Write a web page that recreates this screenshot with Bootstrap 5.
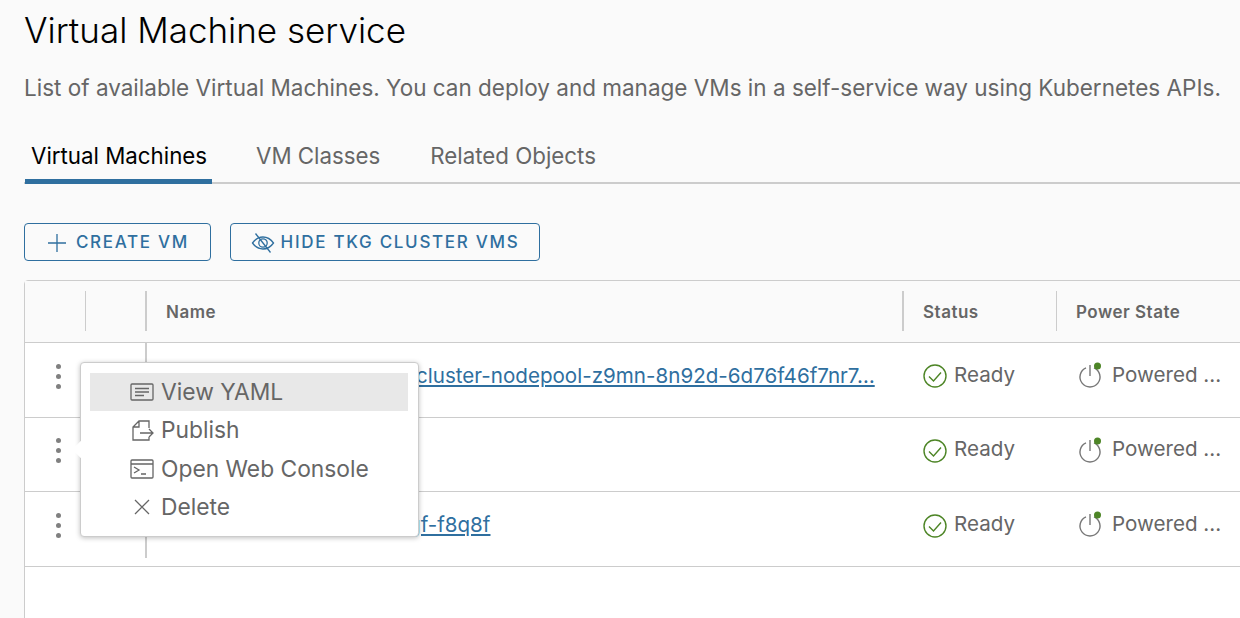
<!DOCTYPE html>
<html lang="en">
<head>
    <meta charset="UTF-8">
    <meta name="viewport" content="width=device-width, initial-scale=1.0">
    <title>Virtual Machine service</title>
    <link href="https://cdn.jsdelivr.net/npm/bootstrap@5.3.2/dist/css/bootstrap.min.css" rel="stylesheet">
    <style>
        html, body { height: 618px; overflow: hidden; }
        body { background: #fafafa; color: #666; font-family: "Inter", "Liberation Sans", sans-serif; }
        .page-wrap { width: 1240px; overflow: hidden; height: 618px; padding: 0 0 0 24px; }
        .page-title { font-size: 35px; font-weight: 300; color: #000; line-height: 40px; margin: 10px 0 0; }
        .page-desc { font-size: 22.500px; line-height: 28px; margin: 24px 0 0; width: 1216px; white-space: nowrap; color: #666; }
        .vm-tabs { width: 1216px; margin-top: 39px; height: 43px; border-bottom: 2px solid #ccc; gap: 38px; flex-wrap: nowrap; }
        .vm-tabs .nav-link { font-size: 22.300px; line-height: 28px; color: #666; padding: 1px 6px 0; height: 43px; margin-bottom: -2px; border-bottom: 5px solid transparent; border-radius: 0; white-space: nowrap; }
        .vm-tabs .nav-link.active { color: #000; border-bottom-color: #2f6f9f; }
        .vm-tabs .nav-item:first-child .nav-link { width: 187px; margin-left: 1px; }
        .action-row { margin-top: 39px; gap: 19px; }
        .vm-btn { height: 38px; display: flex; align-items: center; justify-content: center; gap: 6px; padding: 1px 0 0; font-size: 17px; font-weight: 500; letter-spacing: 1.700px; color: #2f6f9f; background: transparent; border: 1px solid #2f6f9f; border-radius: 4px; white-space: nowrap; }
        .vm-btn:hover { color: #2f6f9f; }
        .btn-create { width: 187px; gap: 8px; }
        .btn-hide { width: 310px; }
        .grid-box { margin-top: 19px; width: 1300px; height: 400px; background: #fff; border: 1px solid #ccc; border-radius: 4px 0 0 0; position: relative; }
        .vm-grid { table-layout: fixed; width: 1300px; margin: 0; --bs-table-bg: transparent; }
        .vm-grid th, .vm-grid td { padding: 0; border: 0; border-bottom: 1px solid #ccc; vertical-align: middle; color: #666; }
        .vm-grid th { height: 61px; background: #fafafa; font-size: 17px; font-weight: 600; letter-spacing: .5px; }
        .vm-grid td { height: 74.500px; font-size: 20.600px; background: #fff; }
        .head-cell { display: flex; align-items: center; height: 40px; border-left: 2px solid #ccc; padding: 2px 0 0 19px; }
        .head-cell.thin { border-left-width: 1px; }
        .stub-line { display: block; height: 74px; border-left: 2px solid #ccc; overflow: hidden; }
        .stub-line.top { height: 20px; margin-bottom: 54px; }
        .stub-line.last { height: 66px; margin-bottom: 8px; }
        .dots { display: flex; flex-direction: column; justify-content: center; align-items: center; gap: 5px; width: 60px; padding: 0 0 7px 6px; }
        .dots i { width: 5px; height: 5px; border-radius: 50%; background: #808080; display: block; }
        .name-cell { position: relative; }
        .vm-link { color: #2f6f9f; position: absolute; top: 20px; left: 271px; font-size: 20.600px; line-height: 26px; white-space: nowrap; }
        .vm-link.tail { left: 263px; }
        .state { display: flex; align-items: center; gap: 7px; padding: 0 0 9px 21px; }
        .state.power { padding-left: 22px; gap: 10px; white-space: nowrap; }
        .ready-ico { margin-top: 3px; }
        .vm-menu { display: block; position: absolute; left: 55px; top: 81px; width: 339px; height: 175px; margin: 0; padding: 10px 10px 0 9px; background: #fff; border: 1px solid #ccc; border-radius: 4px; box-shadow: 0 1px 5px rgba(0,0,0,.25); --bs-dropdown-min-width: 0; }
        .vm-menu::before { content: ""; position: absolute; left: -6px; top: 80px; width: 13px; height: 13px; background: #fff; transform: rotate(45deg); }
        .vm-menu .dropdown-item { position: relative; display: flex; align-items: center; height: 38.400px; padding: 0 0 0 40px; gap: 7px; font-size: 22.800px; color: #666; }
        .vm-menu .dropdown-item.active { background: #e8e8e8; color: #666; }
        .menu-ico { flex: none; width: 24px; height: 24px; }
    </style>
</head>
<body>
<div class="page-wrap">
    <h1 class="page-title">Virtual Machine service</h1>
    <p class="page-desc">List of available Virtual Machines. You can deploy and manage VMs in a self-service way using Kubernetes APIs.</p>

    <ul class="nav vm-tabs">
        <li class="nav-item"><a class="nav-link active" href="#">Virtual Machines</a></li>
        <li class="nav-item"><a class="nav-link" href="#">VM Classes</a></li>
        <li class="nav-item"><a class="nav-link" href="#">Related Objects</a></li>
    </ul>

    <div class="d-flex action-row">
        <button class="btn vm-btn btn-create">
            <svg width="22" height="22" viewBox="0 0 22 22" fill="none" stroke="#2f6f9f" stroke-width="1.300"><path d="M11 2v18M2 11h18"/></svg>
            CREATE VM
        </button>
        <button class="btn vm-btn btn-hide">
            <svg width="24" height="22" viewBox="0 0 24 22" fill="none" stroke="#2f6f9f" stroke-width="1.300"><path d="M1.500 11C4.500 6.800 8 5 12 5s7.500 1.800 10.500 6c-3 4.200-6.500 6-10.500 6S4.500 15.200 1.500 11z"/><circle cx="12" cy="11" r="4.200"/><path d="M4.500 1.500 19.500 20.500"/></svg>
            HIDE TKG CLUSTER VMS
        </button>
    </div>

    <div class="grid-box">
        <table class="table vm-grid">
            <colgroup><col style="width:60px"><col style="width:60px"><col style="width:757px"><col style="width:154px"><col></colgroup>
            <thead>
                <tr>
                    <th></th>
                    <th><div class="head-cell thin"></div></th>
                    <th><div class="head-cell">Name</div></th>
                    <th><div class="head-cell">Status</div></th>
                    <th><div class="head-cell thin">Power State</div></th>
                </tr>
            </thead>
            <tbody>
                <tr>
                    <td><div class="dots"><i></i><i></i><i></i></div></td>
                    <td></td>
                    <td class="name-cell"><span class="stub-line top"></span><a class="vm-link" href="#">cluster-nodepool-z9mn-8n92d-6d76f46f7nr7…</a></td>
                    <td><div class="state"><svg class="ready-ico" width="24" height="24" viewBox="0 0 24 24" fill="none" stroke="#4d8526" stroke-width="1.400"><circle cx="12" cy="12" r="11"/><path d="M6 12.500l4.500 4.500L18 8.500"/></svg>Ready</div></td>
                    <td><div class="state power"><svg width="24" height="26" viewBox="0 0 24 26" fill="none" stroke="#777" stroke-width="1.400"><path d="M8 5.800a10 10 0 1 0 8 0M12 3v11"/><circle cx="19.500" cy="4" r="3.500" fill="#4d8526" stroke="none"/></svg>Powered ...</div></td>
                </tr>
                <tr>
                    <td><div class="dots"><i></i><i></i><i></i></div></td>
                    <td></td>
                    <td></td>
                    <td><div class="state"><svg class="ready-ico" width="24" height="24" viewBox="0 0 24 24" fill="none" stroke="#4d8526" stroke-width="1.400"><circle cx="12" cy="12" r="11"/><path d="M6 12.500l4.500 4.500L18 8.500"/></svg>Ready</div></td>
                    <td><div class="state power"><svg width="24" height="26" viewBox="0 0 24 26" fill="none" stroke="#777" stroke-width="1.400"><path d="M8 5.800a10 10 0 1 0 8 0M12 3v11"/><circle cx="19.500" cy="4" r="3.500" fill="#4d8526" stroke="none"/></svg>Powered ...</div></td>
                </tr>
                <tr>
                    <td><div class="dots"><i></i><i></i><i></i></div></td>
                    <td></td>
                    <td class="name-cell"><span class="stub-line last"></span><a class="vm-link tail" href="#">gf-f8q8f</a></td>
                    <td><div class="state"><svg class="ready-ico" width="24" height="24" viewBox="0 0 24 24" fill="none" stroke="#4d8526" stroke-width="1.400"><circle cx="12" cy="12" r="11"/><path d="M6 12.500l4.500 4.500L18 8.500"/></svg>Ready</div></td>
                    <td><div class="state power"><svg width="24" height="26" viewBox="0 0 24 26" fill="none" stroke="#777" stroke-width="1.400"><path d="M8 5.800a10 10 0 1 0 8 0M12 3v11"/><circle cx="19.500" cy="4" r="3.500" fill="#4d8526" stroke="none"/></svg>Powered ...</div></td>
                </tr>
            </tbody>
        </table>

        <div class="dropdown-menu vm-menu">
            <a class="dropdown-item active" href="#">
                <svg class="menu-ico" viewBox="0 0 24 24" fill="none" stroke="#666" stroke-width="1.300"><rect x="1" y="4" width="22" height="16" rx="1"/><path d="M5 8.500h14M5 12h14M5 15.500h9"/></svg>
                View YAML
            </a>
            <a class="dropdown-item" href="#">
                <svg class="menu-ico" viewBox="0 0 24 24" fill="none" stroke="#666" stroke-width="1.300"><path d="M19 9V2H9L3 8v13h16v-3M9 2v6H3M10 14h13M19 10l4 4-4 4"/></svg>
                Publish
            </a>
            <a class="dropdown-item" href="#">
                <svg class="menu-ico" viewBox="0 0 24 24" fill="none" stroke="#666" stroke-width="1.300"><rect x="1" y="3" width="22" height="18" rx="1"/><path d="M1 7h22M4 10l5 3-5 3M11 17h5"/></svg>
                Open Web Console
            </a>
            <a class="dropdown-item" href="#">
                <svg class="menu-ico" viewBox="0 0 24 24" fill="none" stroke="#666" stroke-width="1.300"><path d="M5 5l14 14M19 5L5 19"/></svg>
                Delete
            </a>
        </div>
    </div>
</div>
<script src="https://cdn.jsdelivr.net/npm/bootstrap@5.3.2/dist/js/bootstrap.bundle.min.js"></script>
</body>
</html>
